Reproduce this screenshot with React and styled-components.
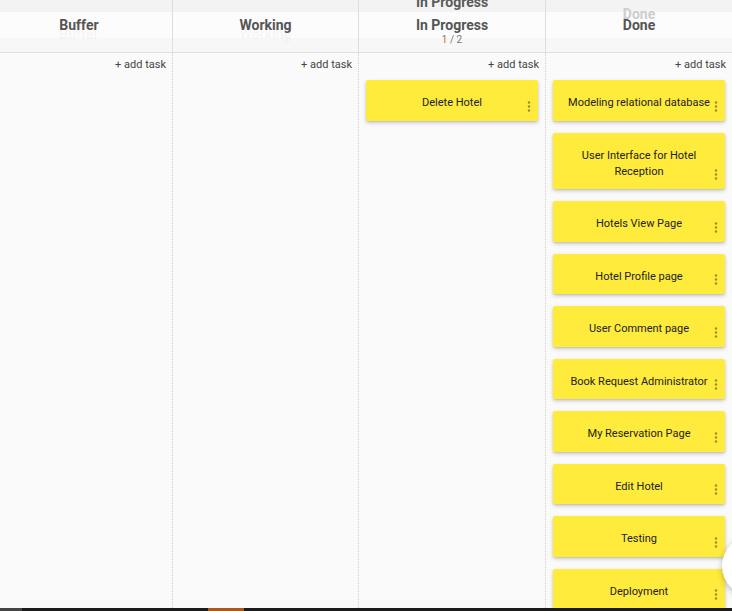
import React from "react";
import styled, { createGlobalStyle } from "styled-components";

const GlobalStyle = createGlobalStyle`
  html, body {
    margin: 0;
    padding: 0;
    height: 100%;
    overflow: hidden;
    background: #fafafa;
    font-family: Roboto, "Liberation Sans", Arial, sans-serif;
  }
  #root {
    height: 100%;
  }
`;

const columns = [
  { id: "buffer", title: "Buffer", width: 186, tasks: [] },
  { id: "working", title: "Working", width: 186, tasks: [] },
  {
    id: "progress",
    title: "In Progress",
    width: 187,
    limit: "1 / 2",
    tasks: ["Delete Hotel"],
  },
  {
    id: "done",
    title: "Done",
    width: 187,
    tasks: [
      "Modeling relational database",
      "User Interface for Hotel Reception",
      "Hotels View Page",
      "Hotel Profile page",
      "User Comment page",
      "Book Request Administrator",
      "My Reservation Page",
      "Edit Hotel",
      "Testing",
      "Deployment",
    ],
  },
];

const ghosts = {
  buffer: { top: 26, color: "rgba(0,0,0,0.035)" },
  working: { top: 26, color: "rgba(0,0,0,0.035)" },
  progress: { top: -6, color: "#5a5a5a" },
  done: { top: 6, color: "#cdcdcd" },
};

const Page = styled.div`
  position: relative;
  display: flex;
  flex-direction: column;
  height: 100%;
  overflow: hidden;
`;

// the board is scrolled a little to the right
const Board = styled.div`
  flex: 1;
  display: flex;
  min-height: 0;
  margin-left: -14px;
`;

const Column = styled.div`
  display: flex;
  flex-direction: column;
  flex: 0 0 ${(p) => p.width}px;
  min-height: 0;
`;

const Header = styled.div`
  position: relative;
  height: 53px;
  box-sizing: border-box;
  border-bottom: 1px solid #e0e0e0;
  border-left: ${(p) => (p.first ? "none" : "1px solid #dedede")};
  background: linear-gradient(
    to bottom,
    #f3f3f3 0,
    #f3f3f3 12px,
    #fcfcfc 12px,
    #fcfcfc 38px,
    #f7f7f7 38px
  );
  overflow: hidden;
  text-align: center;
`;

const Title = styled.div`
  position: relative;
  padding-top: 17px;
  font-size: 14px;
  font-weight: 700;
  line-height: 16px;
  color: #555;
`;

const GhostTitle = styled.div`
  position: absolute;
  left: 0;
  right: 0;
  top: ${(p) => p.top}px;
  font-size: 14px;
  font-weight: 700;
  line-height: 16px;
  color: ${(p) => p.color};
`;

const Limit = styled.div`
  font-size: 10px;
  line-height: 12px;
  color: #777;
  margin-top: 1px;

  span {
    color: #b86b2e;
  }
`;

const Body = styled.div`
  flex: 1;
  min-height: 0;
  overflow: hidden;
  border-left: ${(p) => (p.first ? "none" : "1px dotted #cfcfcf")};
  padding: 5px 7px 0 7px;
  display: flex;
  flex-direction: column;
`;

const AddTask = styled.div`
  align-self: flex-end;
  font-size: 11px;
  line-height: 14px;
  color: #444;
  margin-right: -1px;
  margin-bottom: 8px;
  cursor: pointer;
`;

const Cards = styled.div`
  display: flex;
  flex-direction: column;
  gap: 12px;
`;

const Card = styled.div`
  position: relative;
  background: #ffeb3b;
  border-radius: 2px;
  box-shadow: 0 2px 4px rgba(0, 0, 0, 0.18), 0 1px 2px rgba(0, 0, 0, 0.1);
  padding: 15px 14px 9.5px;
  text-align: center;
  font-size: 11px;
  line-height: 16px;
  color: #222;
`;

const Dots = styled.svg`
  position: absolute;
  right: 7px;
  bottom: 9px;
  width: 4px;
  height: 11px;
`;

const BottomBar = styled.div`
  flex: 0 0 3px;
  display: flex;
  background: #1b1b1b;
`;

const BarSegment = styled.div`
  width: ${(p) => p.width}px;
  margin-left: ${(p) => p.offset || 0}px;
  background: ${(p) => p.color};
`;

const Fab = styled.div`
  position: absolute;
  left: 722px;
  top: 536px;
  width: 60px;
  height: 60px;
  border-radius: 50%;
  background: #fff;
  box-shadow: 0 2px 6px rgba(0, 0, 0, 0.25);
`;

const MoreIcon = () => (
  <Dots viewBox="0 0 4 11">
    <circle cx="2" cy="1.5" r="1.2" fill="rgba(0,0,0,0.4)" />
    <circle cx="2" cy="5.5" r="1.2" fill="rgba(0,0,0,0.4)" />
    <circle cx="2" cy="9.5" r="1.2" fill="rgba(0,0,0,0.4)" />
  </Dots>
);

const App = () => {
  return (
    <Page>
      <GlobalStyle />
      <Board>
        {columns.map((col, i) => (
          <Column key={col.id} width={col.width}>
            <Header first={i === 0}>
              <GhostTitle top={ghosts[col.id].top} color={ghosts[col.id].color}>
                {col.title}
              </GhostTitle>
              <Title>{col.title}</Title>
              {col.limit && (
                <Limit>
                  <span>1</span> / 2
                </Limit>
              )}
            </Header>
            <Body first={i === 0}>
              <AddTask>+ add task</AddTask>
              <Cards>
                {col.tasks.map((task) => (
                  <Card key={task}>
                    {task}
                    <MoreIcon />
                  </Card>
                ))}
              </Cards>
            </Body>
          </Column>
        ))}
      </Board>
      <BottomBar>
        <BarSegment width={22} color="#444" />
        <BarSegment width={36} offset={186} color="#a8581f" />
      </BottomBar>
      <Fab />
    </Page>
  );
};

export default App;
